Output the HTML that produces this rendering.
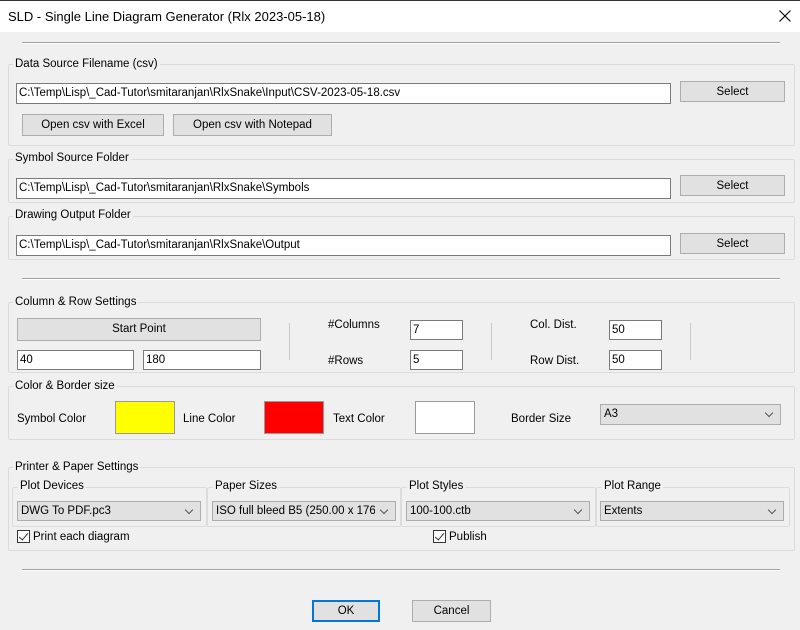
<!DOCTYPE html>
<html><head><style>
*{margin:0;padding:0;box-sizing:border-box}
body{width:800px;height:630px;background:#f0f0f0;font-family:"Liberation Sans",Arial,sans-serif;font-size:11.5px;color:#000;position:relative;overflow:hidden}
.a{position:absolute}
.tb{left:0;top:0;width:800px;height:32px;background:#fff;border-top:1px solid #333}
.sep{height:2px;border-top:1px solid #a0a0a0;border-bottom:1px solid #fff}
.gb{border:1px solid #dcdcdc;border-radius:2px}
.lb{background:#f0f0f0;padding:0 2px;line-height:13px}
.in{background:#fff;border:1px solid #7a7a7a;padding-left:2px;line-height:19px;white-space:nowrap;overflow:hidden}
.bt{background:#e1e1e1;border:1px solid #adadad;text-align:center;padding-top:2px}
.sl{background:#e1e1e1;border:1px solid #adadad;padding-left:3px;line-height:19px;white-space:nowrap;overflow:hidden}
.sl span{display:block;width:calc(100% - 20px);overflow:hidden}
.sl:after{content:"";position:absolute;right:8px;top:5px;width:5px;height:5px;border-right:1px solid #555;border-bottom:1px solid #555;transform:rotate(45deg)}
.vl{width:1px;background:#c8c8c8}
.cb{width:13px;height:13px;border:1px solid #333;background:#fff}
.cb:after{content:"";position:absolute;left:3px;top:0px;width:4px;height:8px;border-right:1.3px solid #333;border-bottom:1.3px solid #333;transform:rotate(40deg)}
</style></head><body>
<div class="a tb"></div>
<div class="a" style="left:8px;top:9px;font-size:13px">SLD - Single Line Diagram Generator (Rlx 2023-05-18)</div>
<svg class="a" style="left:779px;top:10px" width="12" height="12"><path d="M0.5 0.5L11.5 11.5M11.5 0.5L0.5 11.5" stroke="#000" stroke-width="1.1"/></svg>

<div class="a sep" style="left:22px;top:42px;width:758px"></div>

<div class="a gb" style="left:8px;top:64px;width:787px;height:82px"></div>
<div class="a lb" style="left:13px;top:58px">Data Source Filename (csv)</div>
<div class="a in" style="left:16px;top:83px;width:655px;height:21px">C:\Temp\Lisp\_Cad-Tutor\smitaranjan\RlxSnake\Input\CSV-2023-05-18.csv</div>
<div class="a bt" style="left:680px;top:81px;width:105px;height:21px;padding-top:4px">Select</div>
<div class="a bt" style="left:22px;top:114px;width:142px;height:22px;padding-top:4px">Open csv with Excel</div>
<div class="a bt" style="left:173px;top:114px;width:159px;height:22px;padding-top:4px">Open csv with Notepad</div>

<div class="a gb" style="left:8px;top:159px;width:787px;height:44px"></div>
<div class="a lb" style="left:13px;top:152px">Symbol Source Folder</div>
<div class="a in" style="left:16px;top:178px;width:655px;height:21px">C:\Temp\Lisp\_Cad-Tutor\smitaranjan\RlxSnake\Symbols</div>
<div class="a bt" style="left:680px;top:175px;width:105px;height:21px;padding-top:4px">Select</div>

<div class="a gb" style="left:8px;top:216px;width:787px;height:44px"></div>
<div class="a lb" style="left:13px;top:209px">Drawing Output Folder</div>
<div class="a in" style="left:16px;top:235px;width:655px;height:21px">C:\Temp\Lisp\_Cad-Tutor\smitaranjan\RlxSnake\Output</div>
<div class="a bt" style="left:680px;top:233px;width:105px;height:21px;padding-top:4px">Select</div>

<div class="a sep" style="left:22px;top:278px;width:758px"></div>

<div class="a gb" style="left:8px;top:302px;width:787px;height:71px"></div>
<div class="a lb" style="left:13px;top:296px">Column &amp; Row Settings</div>
<div class="a bt" style="left:17px;top:318px;width:244px;height:23px;padding-top:4px">Start Point</div>
<div class="a in" style="left:17px;top:350px;width:117px;height:20px">40</div>
<div class="a in" style="left:143px;top:350px;width:118px;height:20px">180</div>
<div class="a vl" style="left:289px;top:323px;height:37px"></div>
<div class="a" style="left:328px;top:319px">#Columns</div>
<div class="a" style="left:328px;top:355px">#Rows</div>
<div class="a in" style="left:410px;top:320px;width:53px;height:20px">7</div>
<div class="a in" style="left:410px;top:350px;width:53px;height:20px">5</div>
<div class="a vl" style="left:491px;top:323px;height:37px"></div>
<div class="a" style="left:530px;top:319px">Col. Dist.</div>
<div class="a" style="left:530px;top:355px">Row Dist.</div>
<div class="a in" style="left:609px;top:320px;width:53px;height:20px">50</div>
<div class="a in" style="left:609px;top:350px;width:53px;height:20px">50</div>
<div class="a vl" style="left:690px;top:323px;height:37px"></div>

<div class="a gb" style="left:8px;top:386px;width:787px;height:54px"></div>
<div class="a lb" style="left:13px;top:380px">Color &amp; Border size</div>
<div class="a" style="left:17px;top:413px">Symbol Color</div>
<div class="a" style="left:115px;top:401px;width:60px;height:33px;background:#ff0;border:1px solid #999"></div>
<div class="a" style="left:183px;top:413px">Line Color</div>
<div class="a" style="left:264px;top:401px;width:60px;height:33px;background:#f00;border:1px solid #999"></div>
<div class="a" style="left:333px;top:413px">Text Color</div>
<div class="a" style="left:415px;top:401px;width:60px;height:33px;background:#fff;border:1px solid #999"></div>
<div class="a" style="left:511px;top:413px">Border Size</div>
<div class="a sl" style="left:600px;top:404px;width:181px;height:21px"><span>A3</span></div>

<div class="a gb" style="left:8px;top:467px;width:787px;height:84px"></div>
<div class="a lb" style="left:13px;top:461px">Printer &amp; Paper Settings</div>
<div class="a gb" style="left:12px;top:487px;width:195px;height:40px"></div>
<div class="a lb" style="left:18px;top:480px">Plot Devices</div>
<div class="a gb" style="left:207px;top:487px;width:194px;height:40px"></div>
<div class="a lb" style="left:213px;top:480px">Paper Sizes</div>
<div class="a gb" style="left:401px;top:487px;width:195px;height:40px"></div>
<div class="a lb" style="left:407px;top:480px">Plot Styles</div>
<div class="a gb" style="left:596px;top:487px;width:194px;height:40px"></div>
<div class="a lb" style="left:602px;top:480px">Plot Range</div>
<div class="a sl" style="left:17px;top:501px;width:184px;height:20px"><span>DWG To PDF.pc3</span></div>
<div class="a sl" style="left:212px;top:501px;width:184px;height:20px"><span>ISO full bleed B5 (250.00 x 176.00</span></div>
<div class="a sl" style="left:406px;top:501px;width:184px;height:20px"><span>100-100.ctb</span></div>
<div class="a sl" style="left:600px;top:501px;width:184px;height:20px"><span>Extents</span></div>
<div class="a cb" style="left:17px;top:530px"></div>
<div class="a" style="left:33px;top:531px">Print each diagram</div>
<div class="a cb" style="left:433px;top:530px"></div>
<div class="a" style="left:449px;top:531px">Publish</div>

<div class="a sep" style="left:22px;top:569px;width:758px"></div>

<div class="a bt" style="left:312px;top:600px;width:68px;height:22px;padding-top:4px;border:1px solid #0078d7;box-shadow:inset 0 0 0 1px #0078d7">OK</div>
<div class="a bt" style="left:412px;top:600px;width:79px;height:22px;padding-top:4px">Cancel</div>
</body></html>
